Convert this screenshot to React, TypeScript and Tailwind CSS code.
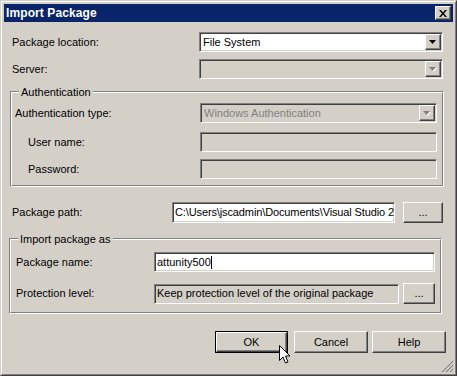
import React from "react";

const sunken =
  "border border-t-[#808080] border-l-[#808080] border-r-white border-b-white shadow-[inset_1px_1px_0_#404040,inset_-1px_-1px_0_#d4d0c8]";
const raised =
  "border border-t-white border-l-white border-r-[#404040] border-b-[#404040] shadow-[inset_-1px_-1px_0_#808080] bg-[#d4d0c8]";

const Arrow = ({ disabled }: { disabled?: boolean }) => (
  <svg width="8" height="5" viewBox="0 0 8 5">
    {disabled && <path d="M1 1h7L4.5 5z" fill="#fff" />}
    <path d="M0 0h7L3.5 4z" fill={disabled ? "#808080" : "#000"} />
  </svg>
);

const Combo = ({
  value,
  disabled,
  className,
}: {
  value?: string;
  disabled?: boolean;
  className: string;
}) => (
  <div
    className={`flex h-[20px] p-px ${sunken} ${disabled ? "bg-[#d4d0c8]" : "bg-white"} ${className}`}
  >
    <div
      className={`flex-1 flex items-center pl-[2px] ${disabled ? "text-[#808080]" : "text-black"}`}
    >
      {value}
    </div>
    <div className={`w-[16px] h-[16px] flex items-center justify-center ${raised}`}>
      <Arrow disabled={disabled} />
    </div>
  </div>
);

const Field = ({
  children,
  disabled,
  className,
}: {
  children?: React.ReactNode;
  disabled?: boolean;
  className: string;
}) => (
  <div
    className={`flex items-center pl-[2px] overflow-hidden whitespace-nowrap ${sunken} ${disabled ? "bg-[#d4d0c8]" : "bg-white"} ${className}`}
  >
    {children}
  </div>
);

const Button = ({ label, className }: { label: string; className: string }) => (
  <div className={`flex items-center justify-center ${raised} ${className}`}>{label}</div>
);

const Group = ({
  title,
  className,
  children,
}: {
  title: string;
  className: string;
  children: React.ReactNode;
}) => (
  <div
    className={`relative border border-t-[#808080] border-l-[#808080] border-r-white border-b-white ${className}`}
  >
    <div className="h-full border border-t-white border-l-white border-r-[#808080] border-b-[#808080]">
      {children}
    </div>
    <span className="absolute top-[-7px] left-[8px] px-[2px] bg-[#d4d0c8] leading-[14px]">
      {title}
    </span>
  </div>
);

export default function App() {
  return (
    <div className="relative w-[457px] h-[376px] bg-[#d4d0c8] font-['Liberation_Sans',Arial,sans-serif] text-[11px] text-black border border-t-[#d4d0c8] border-l-[#d4d0c8] border-r-[#404040] border-b-[#404040]">
      <div className="h-full border border-t-white border-l-white border-r-[#808080] border-b-[#808080] p-[2px]">
        {/* Title bar */}
        <div className="h-[18px] bg-[#0a246a] flex items-center justify-between pl-[2px] pr-[2px]">
          <span className="text-white font-bold text-[12px] tracking-[0.1px]">Import Package</span>
          <div className={`w-[16px] h-[14px] flex items-center justify-center ${raised}`}>
            <svg width="8" height="7" viewBox="0 0 8 7">
              <path d="M0 0h2l2 2.5L6 0h2L5 3.5 8 7H6L4 4.5 2 7H0l3-3.5z" fill="#000" />
            </svg>
          </div>
        </div>

        <div className="flex flex-col px-[5px]">
          <div className="mt-[10px] flex items-center">
            <span className="w-[190px] pl-[3px]">Package location:</span>
            <Combo value="File System" className="w-[244px]" />
          </div>
          <div className="mt-[7px] flex items-center">
            <span className="w-[190px] pl-[3px]">Server:</span>
            <Combo disabled className="w-[244px]" />
          </div>

          <Group title="Authentication" className="mt-[12px] ml-px w-[434px] h-[96px]">
            <div className="pt-[10px] flex flex-col">
              <div className="flex items-center">
                <span className="w-[188px] pl-[3px]">Authentication type:</span>
                <Combo value="Windows Authentication" disabled className="w-[237px]" />
              </div>
              <div className="mt-[9px] flex items-center">
                <span className="w-[188px] pl-[16px]">User name:</span>
                <Field disabled className="w-[237px] h-[20px]" />
              </div>
              <div className="mt-[7px] flex items-center">
                <span className="w-[188px] pl-[16px]">Password:</span>
                <Field disabled className="w-[237px] h-[20px]" />
              </div>
            </div>
          </Group>

          <div className="mt-[15px] flex items-center">
            <span className="w-[163px] pl-[3px]">Package path:</span>
            <Field className="w-[223px] h-[21px]">
              <span className="shrink-0 tracking-[-0.12px]">
                C:\Users\jscadmin\Documents\Visual Studio 2008\Projects\attunity500.dtsx
              </span>
            </Field>
            <Button label="..." className="ml-[8px] w-[40px] h-[21px]" />
          </div>

          <Group title="Import package as" className="mt-[15px] w-[433px] h-[76px]">
            <div className="pt-[12px] flex flex-col">
              <div className="flex items-center">
                <span className="w-[143px] pl-[5px]">Package name:</span>
                <Field className="w-[281px] h-[20px]">
                  <span>attunity500</span>
                  <span className="w-px h-[13px] bg-black" />
                </Field>
              </div>
              <div className="mt-[11px] flex items-center">
                <span className="w-[143px] pl-[5px]">Protection level:</span>
                <Field disabled className="w-[245px] h-[20px]">
                  <span>Keep protection level of the original package</span>
                </Field>
                <Button label="..." className="ml-[4px] w-[32px] h-[21px]" />
              </div>
            </div>
          </Group>

          <div className="mt-[17px] ml-[206px] flex">
            <div className="border border-black">
              <Button label="OK" className="w-[71px] h-[20px]" />
            </div>
            <Button label="Cancel" className="ml-[6px] w-[74px] h-[22px]" />
            <Button label="Help" className="ml-[4px] w-[74px] h-[22px]" />
          </div>
        </div>
      </div>

      {/* mouse pointer */}
      <svg className="absolute left-[278px] top-[344px]" width="13" height="20" viewBox="0 0 13 20">
        <path
          d="M0.5 0.5v15l3.5-3.5 2.5 6 2.5-1-2.5-6H11z"
          fill="#fff"
          stroke="#000"
          strokeWidth="1"
          strokeLinejoin="miter"
        />
      </svg>

      {/* size grip */}
      <svg className="absolute right-[3px] bottom-[3px]" width="12" height="12" viewBox="0 0 12 12">
        <path d="M11 1 1 11M11 5 5 11M11 9 9 11" stroke="#fff" strokeWidth="1" />
        <path d="M12 1 1 12M12 5 5 12M12 9 9 12" stroke="#808080" strokeWidth="1.2" />
      </svg>
    </div>
  );
}
